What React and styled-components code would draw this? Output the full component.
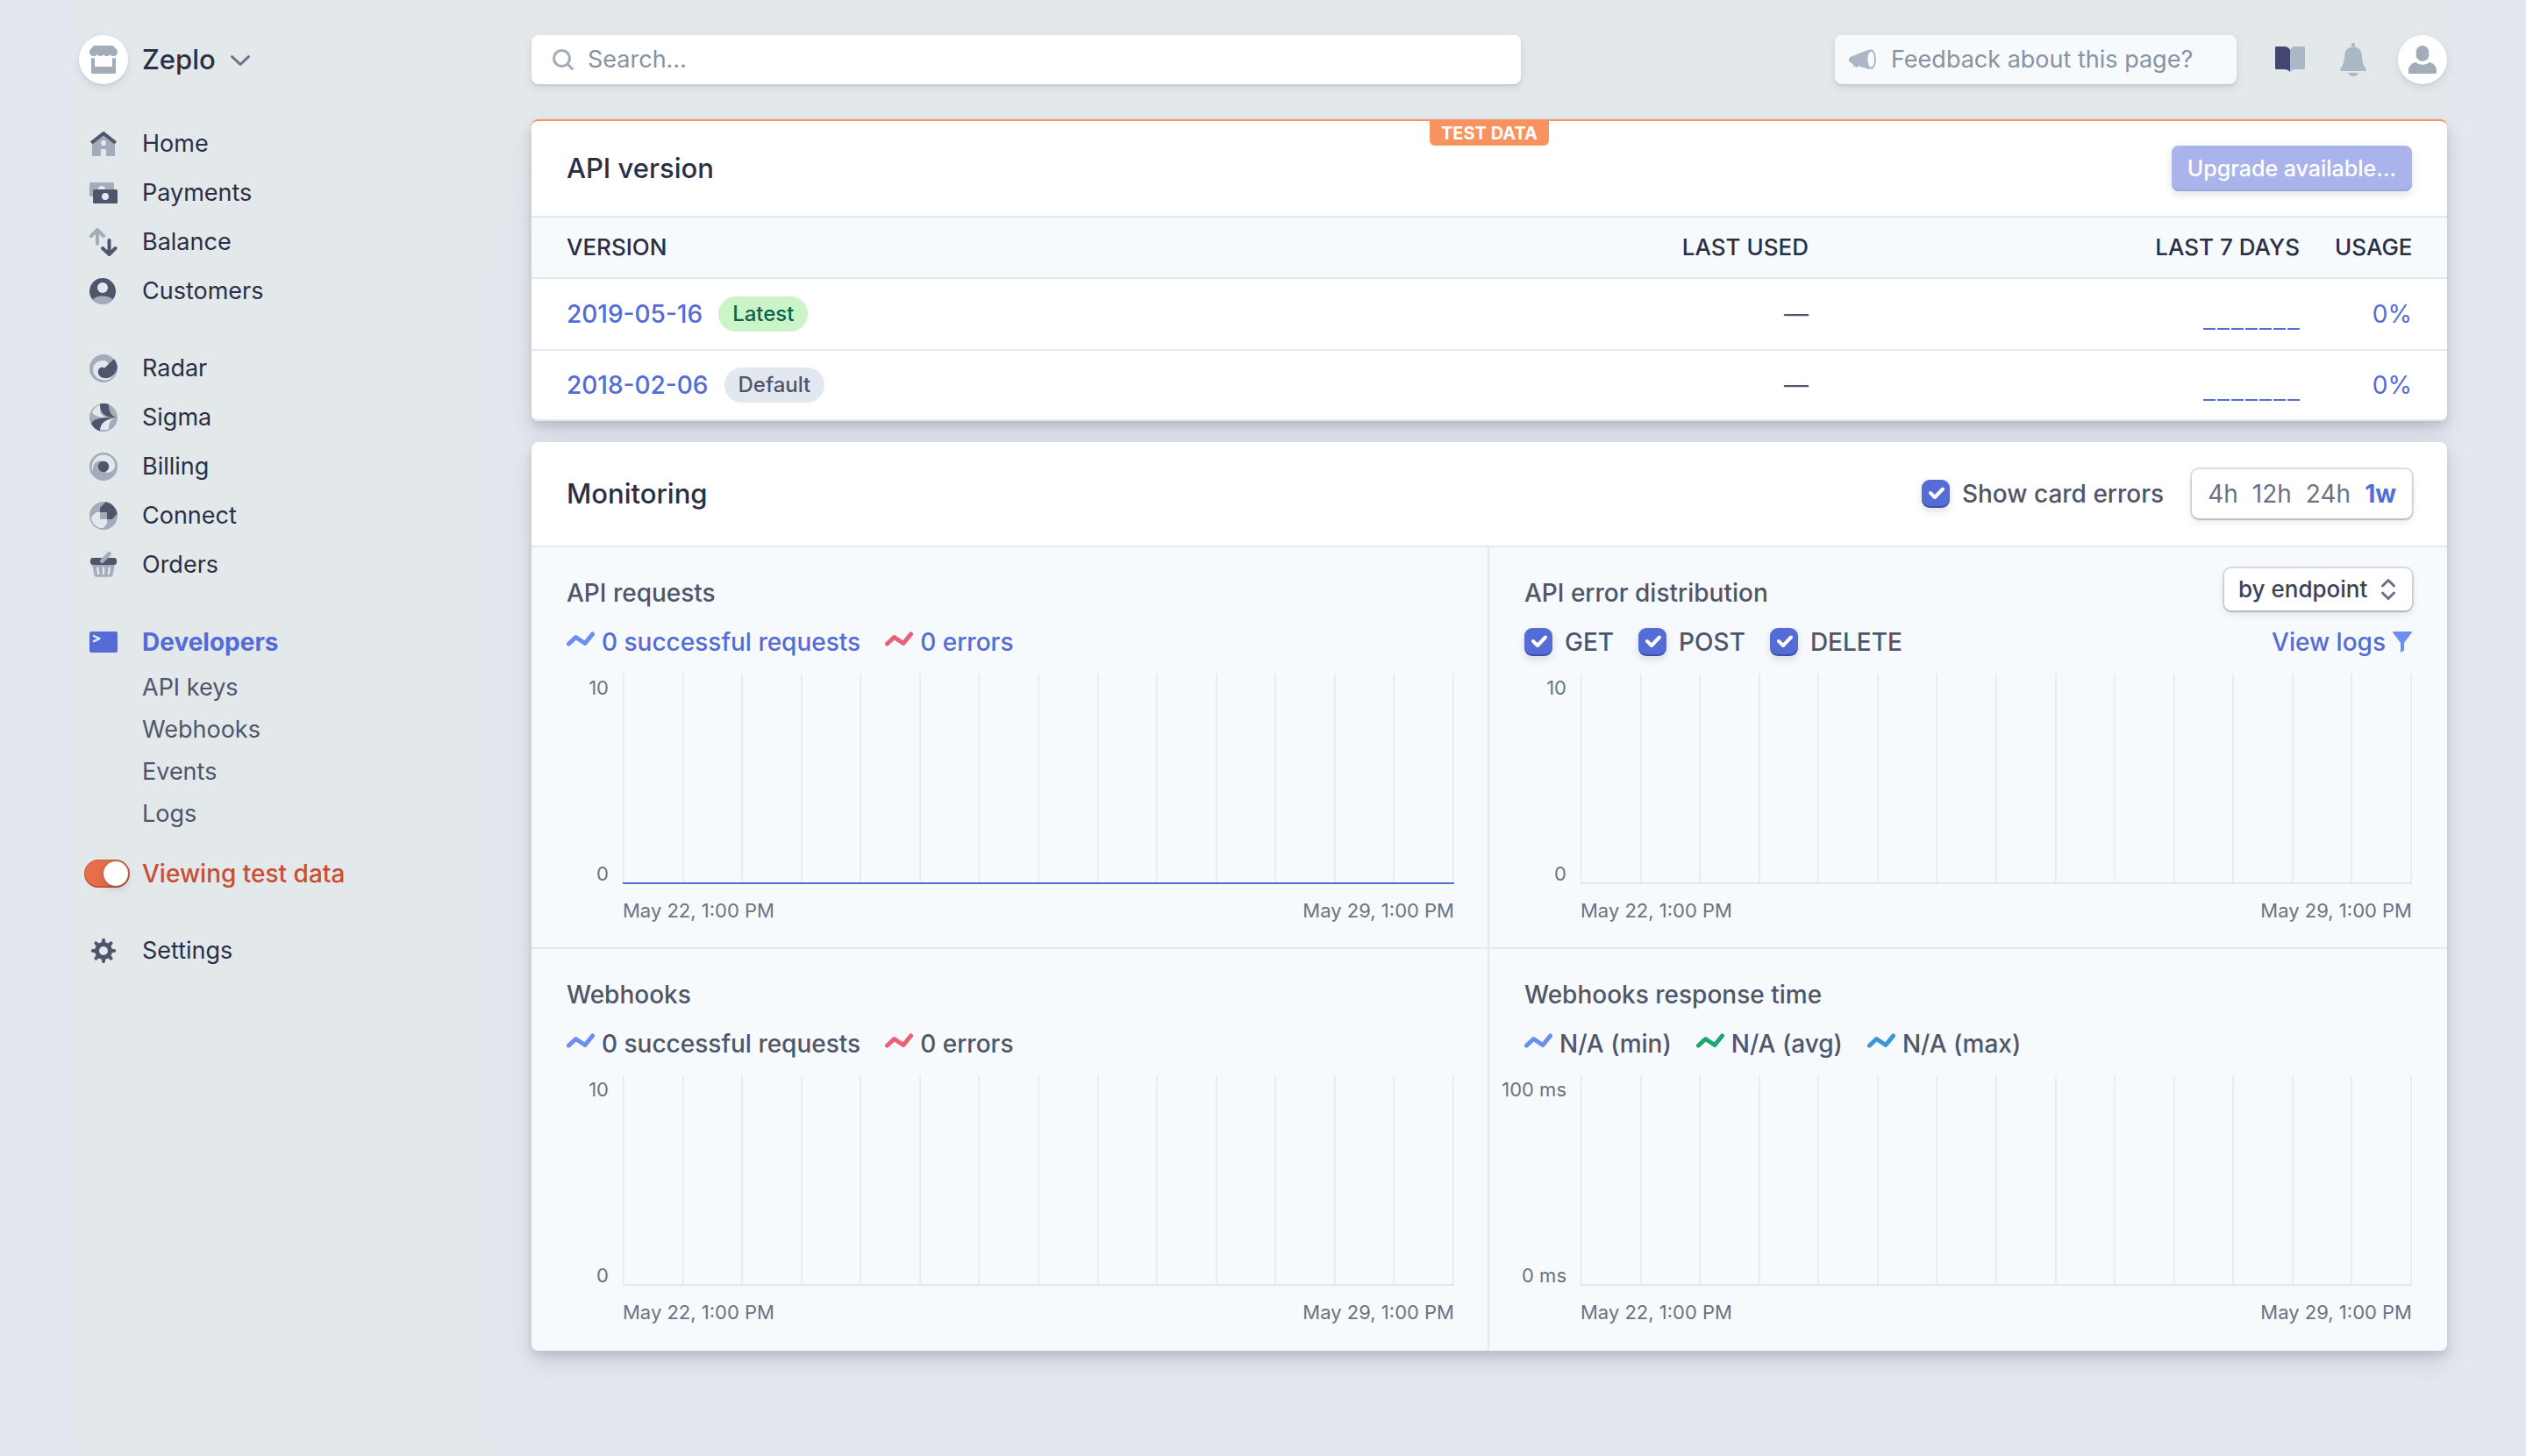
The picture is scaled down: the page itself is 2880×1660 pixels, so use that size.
import React, { useState } from "react";
import styled, { createGlobalStyle } from "styled-components";

const LIGHT = "#a3acb9";
const DARK = "#4f566b";
const HOLE = "#e3e8ee";

/* ---------- icons ---------- */

const Svg = ({ w = 32, h = 32, children }) => (
    <svg
        width={w}
        height={h}
        viewBox={`0 0 ${w} ${h}`}
        fill="none"
        aria-hidden="true"
    >
        {children}
    </svg>
);

const StoreIcon = () => (
    <Svg>
        <path
            fill={LIGHT}
            d="M6 0h20c1 0 1.600.4 2 1.200L31.500 5c.4.800.5 1.500.5 2.200 0 3-2 4.800-4.800 4.800-1.700 0-3-.7-3.900-1.800C22 11.500 21 12 19.600 12c-1.500 0-2.700-.6-3.600-1.800-.9 1.200-2.100 1.800-3.600 1.800-1.400 0-2.600-.6-3.700-1.800C7.800 11.300 6.500 12 4.800 12 2 12 0 10.200 0 7.200 0 6.500.1 5.800.5 5L4 1.200C4.400.4 5 0 6 0z"
        />
        <path
            fill={LIGHT}
            d="M2 14c1.400.5 2.700.5 4 0v10h20V14c1.300.5 2.600.5 4 0v16.500c0 .9-.6 1.500-1.500 1.500h-25c-.9 0-1.500-.6-1.500-1.500z"
        />
    </Svg>
);

const HomeIcon = () => (
    <Svg>
        <path
            fill={LIGHT}
            fillRule="evenodd"
            d="M16 6l13 10.500V28.500c0 .9-.6 1.500-1.500 1.500H19v-7c0-.6-.4-1-1-1h-4c-.6 0-1 .4-1 1v7H4.500c-.9 0-1.500-.6-1.500-1.500V16.500zM16 12a3 3 0 100 6 3 3 0 000-6z"
        />
        <path
            stroke={DARK}
            strokeWidth="4"
            strokeLinejoin="round"
            d="M2.200 15L16 4l13.800 11"
        />
    </Svg>
);

const PaymentsIcon = () => (
    <Svg>
        <rect y="4" width="28" height="16" rx="1.500" fill={LIGHT} />
        <circle cx="14" cy="12" r="4" fill={HOLE} />
        <rect x="4" y="12" width="28" height="16" rx="1.500" fill={DARK} />
        <circle cx="18" cy="20" r="4" fill={HOLE} />
    </Svg>
);

const BalanceIcon = () => (
    <Svg>
        <g strokeWidth="4" strokeLinecap="round" strokeLinejoin="round">
            <path stroke={LIGHT} d="M9 3v15M2 9l7-7 7 7" />
            <path stroke={DARK} d="M22.500 14v15M15 23l7.500 7 7-7" />
        </g>
    </Svg>
);

const CustomersIcon = () => (
    <Svg>
        <circle cx="15" cy="16" r="15" fill={DARK} />
        <circle cx="15" cy="12" r="6" fill={HOLE} />
        <path
            fill={LIGHT}
            d="M3.500 25.500C6 23 10 21.500 15 21.500s9 1.500 11.500 4A15 15 0 0115 31a15 15 0 01-11.500-5.500z"
        />
    </Svg>
);

const RadarIcon = () => (
    <Svg>
        <circle cx="16" cy="16" r="16" fill={LIGHT} />
        <path
            fill={HOLE}
            d="M15 7c4 0 6 2 7 5l9 2c0 9-6 15.500-13.500 15.500C10 29.500 4 24.500 4 17.500 4 11.500 9 7 15 7z"
        />
        <path
            fill={DARK}
            d="M28 5.200A16 16 0 0131.800 14c-.8 8-6.500 13.200-13.300 13.200-5 0-8.700-3-8.700-7.200 0-3 2-5.200 4.500-5.200 1.200 0 2 .5 2.700.9z"
        />
    </Svg>
);

const SigmaIcon = () => (
    <Svg>
        <circle cx="16" cy="16" r="16" fill={LIGHT} />
        <path
            fill={HOLE}
            d="M12 1.800v6.700c1 4 4 7 8.500 7.500C12 16 5.500 14.500 3 10.500 4.500 6 8 3 12 1.800zM30.500 16.500C24 17.500 22 22 22 29c-3 1.300-6.500 1.500-10 .8V27c.5-6 8-10 18.500-10.500z"
        />
        <path
            fill={DARK}
            d="M12 .5C15 -.3 19 -.2 22 .9 22 9 24.500 14 30.500 16 21 16 12 14 12 .5zM22 16.300h8C20 17.500 12 21.500 12 31.400 7.500 30.200 4 27 2.200 23 4 18.500 9.500 16.300 22 16.300z"
        />
    </Svg>
);

const BillingIcon = () => (
    <Svg>
        <circle cx="16" cy="16" r="16" fill={LIGHT} />
        <path
            fill={HOLE}
            d="M3 20C1.500 10 7.500 2.500 16 2.500c7.500 0 13 5 13 12 0 5.500-4.500 9-10.500 8.300L16 10C13 8 3.500 9 4 20z"
        />
        <circle cx="16" cy="16" r="6.200" fill={DARK} />
    </Svg>
);

const ConnectIcon = () => (
    <Svg>
        <circle cx="16" cy="16" r="16" fill={LIGHT} />
        <path
            fill={HOLE}
            d="M7.500 12H12v8h8v5l-4.500 5.200C8 30 2.500 25 2 17.500z"
        />
        <path
            fill={DARK}
            d="M18.500.2A16 16 0 0131.700 13.500L26 20h-6v-8h-8V7z"
        />
    </Svg>
);

const OrdersIcon = () => (
    <Svg>
        <path
            fill={LIGHT}
            d="M3 15h26l-2.500 12.500c-.4 1.500-1.200 2.200-2.800 2.200H8.300c-1.600 0-2.400-.7-2.800-2.200z"
        />
        <path
            stroke={HOLE}
            strokeWidth="2.400"
            strokeLinecap="round"
            d="M9.300 19.500l.9 6.500M16 19.500V26M22.700 19.500l-.9 6.500"
        />
        <rect x="1" y="8" width="30" height="8" rx="3" fill={DARK} />
        <path
            stroke={LIGHT}
            strokeWidth="5"
            strokeLinecap="round"
            d="M14.500 11.500l8-8"
        />
    </Svg>
);

const DevelopersIcon = () => (
    <Svg>
        <rect y="4" width="32" height="24" rx="2" fill="#556cd6" />
        <path
            stroke={HOLE}
            strokeWidth="2.400"
            strokeLinejoin="round"
            d="M4 8.500l7.500 3.600L4 15.700"
        />
    </Svg>
);

const SettingsIcon = () => (
    <Svg>
        <circle cx="16" cy="16" r="7.500" stroke={DARK} strokeWidth="5" />
        {[0, 45, 90, 135, 180, 225, 270, 315].map((deg) => (
            <path
                key={deg}
                fill={DARK}
                transform={`rotate(${deg} 16 16)`}
                d="M13.500 8l.8-5c.1-.7.4-1 1-1h1.400c.6 0 .9.300 1 1l.8 5z"
            />
        ))}
    </Svg>
);

const ChevronDown = () => (
    <Svg w={24} h={16}>
        <path
            stroke="#697386"
            strokeWidth="3"
            strokeLinecap="round"
            strokeLinejoin="round"
            d="M2.500 4.500L12 13.500l9.500-9"
        />
    </Svg>
);

const SearchIcon = () => (
    <Svg w={24} h={24}>
        <circle cx="10.500" cy="10.500" r="9" stroke={LIGHT} strokeWidth="3" />
        <path
            stroke={LIGHT}
            strokeWidth="3"
            strokeLinecap="round"
            d="M17 17l5.500 5.500"
        />
    </Svg>
);

const MegaphoneIcon = () => (
    <Svg w={32} h={24}>
        <path
            fill="#aab8c6"
            d="M1.500 9L23 .5l4 11.500-4 11-12.500-4-.8 1.500c-.4.500-1.200.4-1.800 0l-2.400-1.300c-.6-.4-.8-1-.6-2L1.500 15C-.5 13.500-.5 10.500 1.500 9z"
        />
        <ellipse cx="25" cy="11.700" rx="6" ry="11.500" fill="#aab8c6" />
        <ellipse cx="25.200" cy="11.700" rx="3.800" ry="9" fill="#f7fafc" />
    </Svg>
);

const BookIcon = () => (
    <Svg w={34} h={30}>
        <path
            fill="#434770"
            d="M1.500 0H10c3.500 0 6 1.500 7 4v25c-1.500-2-4-3-7.500-3h-8C.6 26 0 25.500 0 24.500v-23C0 .6.600 0 1.500 0z"
        />
        <path
            fill="#aab8c6"
            d="M32.500 0H24c-3.500 0-6 1.500-7 4v25c1.500-2 4-3 7.500-3h8c.9 0 1.500-.5 1.500-1.500v-23c0-.9-.6-1.500-1.500-1.500z"
        />
    </Svg>
);

const BellIcon = () => (
    <Svg w={30} h={38}>
        <circle cx="15" cy="2.200" r="2.200" fill="#aab8c6" />
        <path
            fill="#aab8c6"
            d="M15 4.500c6 0 9.500 3.500 9.800 9.500.3 8 2.200 11.500 4.700 15.500.8 1.500.2 2.500-1.500 2.500H2C.3 32-.3 31 .5 29.500 3 25.500 4.900 22 5.200 14 5.500 8 9 4.500 15 4.500zM9.500 34h11c-.7 2.500-2.700 4-5.500 4s-4.800-1.500-5.500-4z"
        />
    </Svg>
);

const PersonIcon = () => (
    <Svg>
        <rect x="8.700" width="14.600" height="18" rx="7.300" fill={LIGHT} />
        <path
            fill={LIGHT}
            d="M8.500 19c2 1.800 4.500 2.700 7.500 2.700s5.500-.9 7.500-2.700c5 .8 8.500 4.500 8.500 9.500V30.500c0 1-.5 1.500-1.500 1.500h-29c-1 0-1.500-.5-1.500-1.500v-2c0-5 3.500-8.700 8.500-9.500z"
        />
    </Svg>
);

const LineIcon = ({ color }) => (
    <Svg w={32} h={24}>
        <path
            stroke={color}
            strokeWidth="5"
            strokeLinecap="round"
            strokeLinejoin="round"
            d="M2.500 14l8-7.500 10.500 7 8.500-10.500"
        />
    </Svg>
);

const FilterIcon = () => (
    <Svg w={22} h={24}>
        <path
            fill="#6c8eef"
            d="M.8 0h20.400c.8 0 1 .7.6 1.300L13 13v8.500L9 24V13L.2 1.300C-.2.700 0 0 .8 0z"
        />
    </Svg>
);

const UpDownIcon = () => (
    <Svg w={18} h={26}>
        <path
            stroke="#697386"
            strokeWidth="3"
            strokeLinecap="round"
            strokeLinejoin="round"
            d="M2.500 9L9 2.500 15.500 9M2.500 17L9 23.500l6.500-6.500"
        />
    </Svg>
);

/* ---------- data ---------- */

const NAV_GROUPS = [
    [
        { name: "Home", Icon: HomeIcon },
        { name: "Payments", Icon: PaymentsIcon },
        { name: "Balance", Icon: BalanceIcon },
        { name: "Customers", Icon: CustomersIcon },
    ],
    [
        { name: "Radar", Icon: RadarIcon },
        { name: "Sigma", Icon: SigmaIcon },
        { name: "Billing", Icon: BillingIcon },
        { name: "Connect", Icon: ConnectIcon },
        { name: "Orders", Icon: OrdersIcon },
    ],
];

const SUB_LINKS = ["API keys", "Webhooks", "Events", "Logs"];

const VERSIONS = [
    { version: "2019-05-16", tag: "Latest", usage: "0%" },
    { version: "2018-02-06", tag: "Default", usage: "0%" },
];

const RANGES = ["4h", "12h", "24h", "1w"];

/* ---------- parts ---------- */

function Chart({ max, min, hasLine }) {
    return (
        <ChartGrid>
            <YAxis>
                <span>{max}</span>
                <span>{min}</span>
            </YAxis>
            <Plot $line={hasLine}>
                {Array.from({ length: 15 }, (_, i) => (
                    <GridLine key={i} />
                ))}
            </Plot>
            <XAxis>
                <span>May 22, 1:00 PM</span>
                <span>May 29, 1:00 PM</span>
            </XAxis>
        </ChartGrid>
    );
}

function Check({ label }) {
    const [checked, setChecked] = useState(true);
    return (
        <CheckLabel>
            <CheckBox
                type="checkbox"
                checked={checked}
                onChange={() => setChecked(!checked)}
            />
            {label}
        </CheckLabel>
    );
}

function App() {
    const [range, setRange] = useState("1w");
    const [testData, setTestData] = useState(true);

    return (
        <>
            <GlobalStyle />
            <Page>
                <Sidebar>
                    <Account type="button">
                        <Circle>
                            <StoreIcon />
                        </Circle>
                        <span>Zeplo</span>
                        <ChevronDown />
                    </Account>
                    <Nav>
                        {NAV_GROUPS.map((group, i) => (
                            <NavGroup key={i}>
                                {group.map(({ name, Icon }) => (
                                    <NavLink href="#" key={name}>
                                        <IconSlot>
                                            <Icon />
                                        </IconSlot>
                                        {name}
                                    </NavLink>
                                ))}
                            </NavGroup>
                        ))}
                        <NavGroup>
                            <NavLink href="#" $active>
                                <IconSlot>
                                    <DevelopersIcon />
                                </IconSlot>
                                Developers
                            </NavLink>
                            {SUB_LINKS.map((name) => (
                                <SubLink href="#" key={name}>
                                    {name}
                                </SubLink>
                            ))}
                            <ToggleLabel>
                                <Toggle
                                    type="checkbox"
                                    role="switch"
                                    checked={testData}
                                    onChange={() => setTestData(!testData)}
                                />
                                Viewing test data
                            </ToggleLabel>
                        </NavGroup>
                        <NavGroup>
                            <NavLink href="#">
                                <IconSlot>
                                    <SettingsIcon />
                                </IconSlot>
                                Settings
                            </NavLink>
                        </NavGroup>
                    </Nav>
                </Sidebar>

                <Main>
                    <TopBar>
                        <SearchBox>
                            <SearchIcon />
                            <input
                                type="text"
                                placeholder="Search…"
                                aria-label="Search"
                            />
                        </SearchBox>
                        <TopActions>
                            <Feedback type="button">
                                <MegaphoneIcon />
                                Feedback about this page?
                            </Feedback>
                            <IconButton type="button" aria-label="Docs">
                                <BookIcon />
                            </IconButton>
                            <IconButton type="button" aria-label="Notifications">
                                <BellIcon />
                            </IconButton>
                            <Avatar type="button" aria-label="Profile">
                                <Circle>
                                    <PersonIcon />
                                </Circle>
                            </Avatar>
                        </TopActions>
                    </TopBar>

                    <Card $test>
                        <TestTag>TEST DATA</TestTag>
                        <CardHeader>
                            <h2>API version</h2>
                            <UpgradeButton type="button">
                                Upgrade available…
                            </UpgradeButton>
                        </CardHeader>
                        <VersionTable>
                            <thead>
                                <tr>
                                    <Th>VERSION</Th>
                                    <Th $right $width="560px">
                                        LAST USED
                                    </Th>
                                    <Th $right $width="560px">
                                        LAST 7 DAYS
                                    </Th>
                                    <Th $right $width="148px">
                                        USAGE
                                    </Th>
                                </tr>
                            </thead>
                            <tbody>
                                {VERSIONS.map((item) => (
                                    <tr key={item.version}>
                                        <Td>
                                            <VersionCell>
                                                <a href="#">{item.version}</a>
                                                <Badge
                                                    $green={
                                                        item.tag === "Latest"
                                                    }
                                                >
                                                    {item.tag}
                                                </Badge>
                                            </VersionCell>
                                        </Td>
                                        <Td $right>—</Td>
                                        <Td $right>
                                            <Spark>
                                                {Array.from(
                                                    { length: 7 },
                                                    (_, i) => (
                                                        <i key={i} />
                                                    )
                                                )}
                                            </Spark>
                                        </Td>
                                        <Td $right>
                                            <a href="#">{item.usage}</a>
                                        </Td>
                                    </tr>
                                ))}
                            </tbody>
                        </VersionTable>
                    </Card>

                    <Card>
                        <CardHeader $tall>
                            <h2>Monitoring</h2>
                            <HeaderTools>
                                <Check label="Show card errors" />
                                <Segmented>
                                    {RANGES.map((item) => (
                                        <Range
                                            type="button"
                                            key={item}
                                            $active={range === item}
                                            onClick={() => setRange(item)}
                                        >
                                            {item}
                                        </Range>
                                    ))}
                                </Segmented>
                            </HeaderTools>
                        </CardHeader>
                        <Panels>
                            <Panel>
                                <PanelHead>
                                    <h3>API requests</h3>
                                </PanelHead>
                                <Legend>
                                    <LegendLink href="#">
                                        <LineIcon color="#6c8eef" />0 successful
                                        requests
                                    </LegendLink>
                                    <LegendLink href="#">
                                        <LineIcon color="#ed5f74" />0 errors
                                    </LegendLink>
                                </Legend>
                                <Chart max="10" min="0" hasLine />
                            </Panel>
                            <Panel>
                                <PanelHead>
                                    <h3>API error distribution</h3>
                                    <SelectBox>
                                        <select
                                            aria-label="Group errors"
                                            defaultValue="endpoint"
                                        >
                                            <option value="endpoint">
                                                by endpoint
                                            </option>
                                        </select>
                                        <UpDownIcon />
                                    </SelectBox>
                                </PanelHead>
                                <Legend>
                                    <Check label="GET" />
                                    <Check label="POST" />
                                    <Check label="DELETE" />
                                    <ViewLogs href="#">
                                        View logs
                                        <FilterIcon />
                                    </ViewLogs>
                                </Legend>
                                <Chart max="10" min="0" />
                            </Panel>
                            <Panel>
                                <PanelHead>
                                    <h3>Webhooks</h3>
                                </PanelHead>
                                <Legend>
                                    <LegendItem>
                                        <LineIcon color="#6c8eef" />0 successful
                                        requests
                                    </LegendItem>
                                    <LegendItem>
                                        <LineIcon color="#ed5f74" />0 errors
                                    </LegendItem>
                                </Legend>
                                <Chart max="10" min="0" />
                            </Panel>
                            <Panel>
                                <PanelHead>
                                    <h3>Webhooks response time</h3>
                                </PanelHead>
                                <Legend>
                                    <LegendItem>
                                        <LineIcon color="#6c8eef" />
                                        N/A (min)
                                    </LegendItem>
                                    <LegendItem>
                                        <LineIcon color="#1ea672" />
                                        N/A (avg)
                                    </LegendItem>
                                    <LegendItem>
                                        <LineIcon color="#3a97d4" />
                                        N/A (max)
                                    </LegendItem>
                                </Legend>
                                <Chart max="100 ms" min="0 ms" />
                            </Panel>
                        </Panels>
                    </Card>
                </Main>
            </Page>
        </>
    );
}

export default App;

/* ---------- styles ---------- */

const GlobalStyle = createGlobalStyle`
    * {
        box-sizing: border-box;
    }
    body {
        margin: 0;
        background: #e3e7ef;
        color: #2a2f45;
        font-family: Inter, "Liberation Sans", sans-serif;
        font-size: 27px;
        line-height: 40px;
    }
    h2, h3 {
        margin: 0;
        font-weight: 500;
    }
    a {
        color: #556cd6;
        text-decoration: none;
    }
    button, input, select {
        font: inherit;
        color: inherit;
        margin: 0;
        padding: 0;
        border: 0;
        background: none;
        outline: none;
    }
    button {
        cursor: pointer;
    }
    svg {
        display: block;
        flex: none;
    }
`;

const Page = styled.div`
    display: flex;
    min-height: 100vh;
    background: linear-gradient(
            90deg,
            #e3e7ef 80px,
            #e3e8eb 88px,
            #e3e8eb 500px,
            rgba(227, 232, 235, 0) 620px
        ),
        linear-gradient(90deg, rgba(227, 231, 239, 0) 96%, #e3e7ef 98%),
        linear-gradient(180deg, #e3e8eb 130px, #e3e7ef 300px);
`;

const Sidebar = styled.aside`
    flex: none;
    width: 606px;
    padding: 40px 0 40px 90px;
`;

const Account = styled.button`
    display: flex;
    align-items: center;
    gap: 16px;
    font-size: 31px;
    font-weight: 500;
`;

const Circle = styled.span`
    display: flex;
    align-items: center;
    justify-content: center;
    width: 56px;
    height: 56px;
    border-radius: 50%;
    background: #fff;
    box-shadow: 0 4px 10px rgba(60, 66, 87, 0.12),
        0 2px 2px rgba(0, 0, 0, 0.04);
`;

const Nav = styled.nav`
    display: flex;
    flex-direction: column;
    gap: 32px;
    margin-top: 40px;
`;

const NavGroup = styled.div`
    display: flex;
    flex-direction: column;
`;

const NavLink = styled.a`
    display: flex;
    align-items: center;
    gap: 16px;
    height: 56px;
    color: ${(p) => (p.$active ? "#556cd6" : "#2a2f45")};
    font-size: ${(p) => (p.$active ? "28px" : "27px")};
    font-weight: ${(p) => (p.$active ? 700 : 400)};
`;

const IconSlot = styled.span`
    display: flex;
    justify-content: center;
    width: 56px;
`;

const SubLink = styled.a`
    padding-left: 72px;
    color: #4f566b;
    line-height: 48px;
`;

const ToggleLabel = styled.label`
    display: flex;
    align-items: center;
    gap: 14px;
    height: 56px;
    margin-top: 16px;
    padding-left: 6px;
    color: #c84d31;
    font-size: 28px;
    font-weight: 500;
`;

const Toggle = styled.input`
    appearance: none;
    width: 52px;
    height: 32px;
    padding: 2px;
    border-radius: 16px;
    background: #a3acb9;
    box-shadow: inset 0 0 0 1px rgba(0, 0, 0, 0.12),
        inset 0 -2px 0 rgba(160, 30, 10, 0.3);
    &::before {
        content: "";
        display: block;
        width: 28px;
        height: 28px;
        border-radius: 50%;
        background: #fff;
        box-shadow: 0 0 2px rgba(120, 20, 0, 0.6),
            0 4px 10px rgba(60, 66, 87, 0.2);
    }
    &:checked {
        background: #e56f4a;
    }
    &:checked::before {
        margin-left: 20px;
    }
`;

const Main = styled.main`
    flex: 1;
    min-width: 0;
    padding: 40px 90px 40px 0;
`;

const TopBar = styled.div`
    display: flex;
    justify-content: space-between;
    gap: 40px;
    margin-bottom: 40px;
`;

const SearchBox = styled.label`
    display: flex;
    align-items: center;
    gap: 16px;
    flex: 0 1 1128px;
    height: 56px;
    padding: 0 24px;
    border-radius: 8px;
    background: #fff;
    box-shadow: 0 4px 10px rgba(60, 66, 87, 0.12),
        0 2px 2px rgba(0, 0, 0, 0.08);
    input {
        flex: 1;
        min-width: 0;
    }
    input::placeholder {
        color: #8792a2;
        opacity: 1;
    }
`;

const TopActions = styled.div`
    display: flex;
    align-items: center;
    gap: 30px;
`;

const Feedback = styled.button`
    display: flex;
    align-items: center;
    gap: 16px;
    width: 458px;
    height: 56px;
    margin-right: 10px;
    padding: 0 16px;
    border-radius: 8px;
    background: #f7fafc;
    color: #8792a2;
    white-space: nowrap;
    box-shadow: 0 4px 10px rgba(60, 66, 87, 0.12),
        0 2px 2px rgba(0, 0, 0, 0.08);
`;

const IconButton = styled.button`
    display: flex;
    justify-content: center;
    width: 42px;
`;

const Avatar = styled.button`
    border-radius: 50%;
`;

const Card = styled.section`
    position: relative;
    margin-bottom: 24px;
    border-top: ${(p) => (p.$test ? "2px solid #f8935f" : "0")};
    border-radius: 8px;
    background: #fff;
    box-shadow: 0 14px 28px rgba(60, 66, 87, 0.12),
        0 6px 12px rgba(0, 0, 0, 0.12);
`;

const TestTag = styled.span`
    position: absolute;
    top: 0;
    left: 50%;
    transform: translateX(-50%);
    padding: 0 13px;
    border-radius: 0 0 6px 6px;
    background: #f8935f;
    color: #fff;
    font-size: 20px;
    font-weight: 700;
    line-height: 28px;
    white-space: nowrap;
`;

const CardHeader = styled.header`
    display: flex;
    align-items: center;
    justify-content: space-between;
    height: ${(p) => (p.$tall ? "120px" : "110px")};
    padding: 0 40px;
    border-bottom: 2px solid #e3e8ee;
    h2 {
        font-size: 31px;
    }
`;

const UpgradeButton = styled.button`
    height: 52px;
    padding: 0 18px;
    border-radius: 8px;
    background: #aab4eb;
    color: #fff;
    font-size: 25px;
    font-weight: 500;
    box-shadow: inset 0 -2px 0 #9fa6dc, 0 4px 10px rgba(60, 66, 87, 0.14);
`;

const VersionTable = styled.table`
    width: 100%;
    border-spacing: 0;
    table-layout: fixed;
`;

const Th = styled.th`
    width: ${(p) => p.$width || "auto"};
    height: 70px;
    padding: 0 20px;
    border-bottom: 2px solid #e3e8ee;
    background: #f7fafc;
    font-size: 26px;
    font-weight: 500;
    text-align: ${(p) => (p.$right ? "right" : "left")};
    white-space: nowrap;
    &:first-child {
        padding-left: 40px;
    }
    &:last-child {
        padding-right: 40px;
    }
`;

const Td = styled.td`
    height: 82px;
    padding: 0 20px;
    border-bottom: 2px solid #e3e8ee;
    color: #4f566b;
    font-size: 28px;
    text-align: ${(p) => (p.$right ? "right" : "left")};
    &:first-child {
        padding-left: 40px;
        font-weight: 500;
    }
    &:last-child {
        padding-right: 40px;
    }
    tr:last-child > & {
        height: 80px;
    }
    tr:last-child > &:first-child {
        border-bottom-left-radius: 8px;
    }
    tr:last-child > &:last-child {
        border-bottom-right-radius: 8px;
    }
`;

const VersionCell = styled.div`
    display: flex;
    align-items: center;
    gap: 18px;
`;

const Badge = styled.span`
    padding: 0 16px;
    border-radius: 20px;
    background: ${(p) => (p.$green ? "#cbf4c9" : "#e3e8ee")};
    color: ${(p) => (p.$green ? "#0e6245" : "#4f566b")};
    font-size: 24px;
    font-weight: 500;
`;

const Spark = styled.div`
    display: flex;
    align-items: flex-end;
    justify-content: flex-end;
    gap: 2px;
    height: 36px;
    i {
        width: 14px;
        height: 2px;
        background: #556cd6;
    }
`;

const HeaderTools = styled.div`
    display: flex;
    align-items: center;
    gap: 32px;
`;

const CheckLabel = styled.label`
    display: flex;
    align-items: center;
    gap: 14px;
    color: #4f566b;
    font-size: 28px;
    font-weight: 500;
`;

const CheckBox = styled.input`
    appearance: none;
    flex: none;
    width: 32px;
    height: 32px;
    border-radius: 9px;
    background: #fff;
    box-shadow: inset 0 0 0 2px #c1c9d2, 0 4px 8px rgba(60, 66, 87, 0.16);
    &:checked {
        background: #556cd6
            url("data:image/svg+xml,%3Csvg xmlns='http://www.w3.org/2000/svg' width='32' height='32' fill='none'%3E%3Cpath d='M10 15l5 5 9-9.500' stroke='white' stroke-width='4' stroke-linecap='round' stroke-linejoin='round'/%3E%3C/svg%3E");
        box-shadow: inset 0 -2px 0 #3d4eac, 0 4px 8px rgba(60, 66, 87, 0.16);
    }
`;

const Segmented = styled.div`
    display: flex;
    align-items: center;
    gap: 16px;
    height: 56px;
    padding: 0 18px;
    border-radius: 8px;
    background: #fff;
    font-size: 28px;
    box-shadow: 0 0 0 2px rgba(60, 66, 87, 0.16),
        0 2px 2px rgba(0, 0, 0, 0.12), 0 4px 10px rgba(60, 66, 87, 0.12);
`;

const Range = styled.button`
    color: ${(p) => (p.$active ? "#556cd6" : "#697386")};
    font-weight: ${(p) => (p.$active ? 700 : 400)};
`;

const Panels = styled.div`
    display: grid;
    grid-template-columns: 1fr 1fr;
    border-radius: 0 0 8px 8px;
    background: #f7fafc;
`;

const Panel = styled.div`
    padding: 24px 40px 0;
    border-bottom: 2px solid transparent;
    &:nth-child(odd) {
        padding-right: 38px;
        border-right: 2px solid #e3e8ee;
    }
    &:nth-child(-n + 2) {
        border-bottom-color: #e3e8ee;
    }
`;

const PanelHead = styled.div`
    display: flex;
    align-items: center;
    justify-content: space-between;
    height: 56px;
    h3 {
        color: #4f566b;
        font-size: 28px;
    }
`;

const SelectBox = styled.span`
    display: grid;
    align-items: center;
    margin-bottom: 8px;
    border-radius: 8px;
    background: #fff;
    box-shadow: 0 0 0 2px rgba(60, 66, 87, 0.16),
        0 2px 2px rgba(0, 0, 0, 0.12), 0 4px 10px rgba(60, 66, 87, 0.12);
    select,
    svg {
        grid-area: 1 / 1;
    }
    select {
        appearance: none;
        height: 48px;
        padding: 0 50px 0 16px;
        color: #3c4257;
        font-size: 26px;
        font-weight: 500;
    }
    svg {
        justify-self: end;
        margin-right: 18px;
        pointer-events: none;
    }
`;

const Legend = styled.div`
    display: flex;
    align-items: center;
    gap: 28px;
    height: 56px;
    margin-bottom: 8px;
    font-size: 28px;
    font-weight: 500;
    white-space: nowrap;
`;

const LegendItem = styled.span`
    display: flex;
    align-items: center;
    gap: 8px;
    color: #4f566b;
`;

const LegendLink = styled.a`
    display: flex;
    align-items: center;
    gap: 8px;
`;

const ViewLogs = styled.a`
    display: flex;
    align-items: center;
    gap: 8px;
    margin-left: auto;
`;

const ChartGrid = styled.div`
    display: grid;
    grid-template-columns: 48px 1fr;
    column-gap: 16px;
    color: #697386;
    font-size: 22px;
    line-height: 28px;
`;

const YAxis = styled.div`
    display: flex;
    flex-direction: column;
    align-items: flex-end;
    justify-content: space-between;
    /* long labels run out to the left */
    width: 48px;
    padding-top: 4px;
    line-height: 24px;
    white-space: nowrap;
`;

const Plot = styled.div`
    display: flex;
    justify-content: space-between;
    height: 240px;
    border-bottom: 2px solid ${(p) => (p.$line ? "#556cd6" : "#e3e8ea")};
`;

const GridLine = styled.i`
    width: 2px;
    background: #e8edf0;
`;

const XAxis = styled.div`
    display: flex;
    grid-column: 2;
    justify-content: space-between;
    padding: 16px 0 28px;
`;
